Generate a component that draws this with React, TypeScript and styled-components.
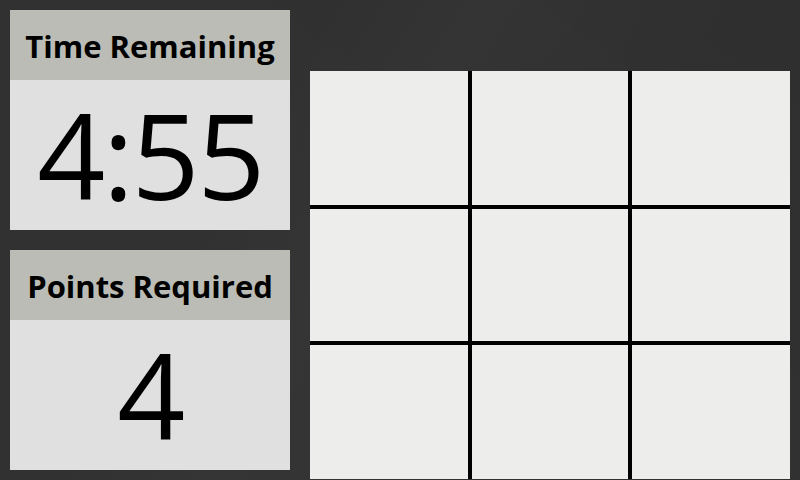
import React from "react";
import styled, { createGlobalStyle } from "styled-components";

const Global = createGlobalStyle`
  html, body { margin: 0; padding: 0; }
  body {
    width: 800px;
    height: 480px;
    overflow: hidden;
    background-color: #313131;
    background-image:
      linear-gradient(120deg, rgba(255,255,255,0.0) 30%, rgba(255,255,255,0.02) 45%, rgba(255,255,255,0.0) 70%),
      linear-gradient(35deg, rgba(0,0,0,0.0) 55%, rgba(0,0,0,0.05) 100%);
    font-family: "Open Sans", "Noto Sans", "DejaVu Sans", sans-serif;
  }
`;

const Page = styled.div`
  display: flex;
  align-items: flex-start;
  padding: 10px;
  gap: 20px;
  box-sizing: border-box;
  height: 480px;
`;

const Side = styled.div`
  display: flex;
  flex-direction: column;
  gap: 20px;
  width: 280px;
`;

const Card = styled.section`
  display: flex;
  flex-direction: column;
  height: 220px;
  background: #e0e0e0;
`;

const CardTitle = styled.h2`
  margin: 0;
  height: 70px;
  display: flex;
  align-items: center;
  justify-content: center;
  background: #babcb5;
  color: #000;
  font-family: "Open Sans", "Noto Sans", sans-serif;
  font-weight: 700;
  font-size: 31px;
  letter-spacing: 0;
  white-space: nowrap;
  padding-top: 2px;
  box-sizing: border-box;
`;

const CardValue = styled.div`
  flex: 1;
  display: flex;
  align-items: center;
  justify-content: center;
  color: #000;
  font-family: "Open Sans", "Noto Sans", sans-serif;
  font-weight: 400;
  font-size: 119px;
  line-height: 1;
  padding-bottom: 2px;
  letter-spacing: -2.5px;
`;

const Board = styled.div`
  margin-top: 61px;
  display: grid;
  grid-template-columns: repeat(3, 160px);
  grid-template-rows: repeat(3, 136px);
`;

const Cell = styled.div<{ $row: number; $col: number }>`
  box-sizing: border-box;
  background: #ededeb;
  border-style: solid;
  border-color: #000;
  border-width: ${(p) => (p.$row > 0 ? 2 : 0)}px ${(p) => (p.$col < 2 ? 2 : 0)}px
    ${(p) => (p.$row < 2 ? 2 : 0)}px ${(p) => (p.$col > 0 ? 2 : 0)}px;
`;

export default function App() {
  const cells = [];
  for (let r = 0; r < 3; r++) {
    for (let c = 0; c < 3; c++) {
      cells.push(<Cell key={`${r}-${c}`} $row={r} $col={c} />);
    }
  }
  return (
    <>
      <Global />
      <Page>
        <Side>
          <Card>
            <CardTitle>Time Remaining</CardTitle>
            <CardValue>4:55</CardValue>
          </Card>
          <Card>
            <CardTitle>Points Required</CardTitle>
            <CardValue>4</CardValue>
          </Card>
        </Side>
        <Board>{cells}</Board>
      </Page>
    </>
  );
}
